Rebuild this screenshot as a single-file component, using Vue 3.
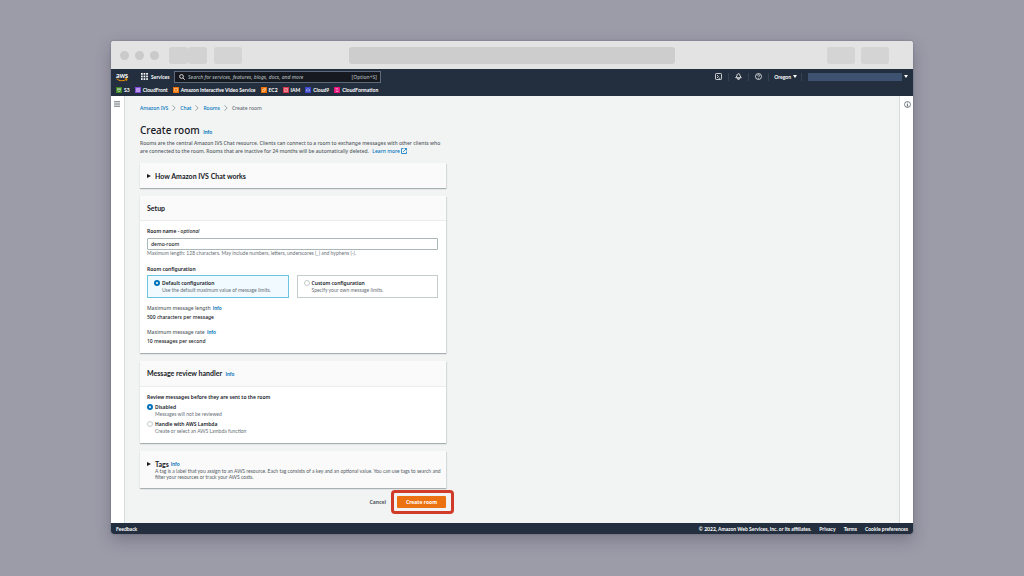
<template>
  <div class="desktop">
    <div class="window">
      <div class="chrome">
        <div class="lights"><i></i><i></i><i></i></div>
        <div class="tabs"><i></i><i></i></div>
        <div class="tab"></div>
        <div class="address"></div>
        <div class="tab tab-end"></div>
        <div class="tab"></div>
      </div>

      <header class="nav">
        <div class="nav-row">
          <a href="#" class="logo" aria-label="AWS">
            <span>aws</span>
            <svg viewBox="0 0 24 7" width="12" height="4">
              <path d="M1 1c6 5 14 5 20 1M18 1l4 0-1 4" fill="none" stroke="#f90" stroke-width="2" />
            </svg>
          </a>
          <button class="services">
            <svg viewBox="0 0 7 7" width="7" height="7" fill="#fff">
              <template v-for="y in 3" :key="y">
                <rect v-for="x in 3" :key="x" :x="(x - 1) * 2.6" :y="(y - 1) * 2.6" width="1.7" height="1.7" />
              </template>
            </svg>
            Services
          </button>
          <label class="search">
            <svg viewBox="0 0 12 12" width="6" height="6" fill="none" stroke="#fff" stroke-width="1.6">
              <circle cx="5" cy="5" r="3.8" />
              <path d="M8 8l3.5 3.5" />
            </svg>
            <input
              v-model="query"
              type="search"
              aria-label="Search"
              placeholder="Search for services, features, blogs, docs, and more"
            />
            <span>[Option+S]</span>
          </label>
          <div class="nav-tools">
            <button aria-label="CloudShell">
              <svg viewBox="0 0 14 14" width="7" height="7" fill="none" stroke="#fff" stroke-width="1.5">
                <rect x="1" y="1" width="12" height="12" rx="1.5" />
                <path d="M4 4l3 3-3 3M7.500 10.500h3" />
              </svg>
            </button>
            <button aria-label="Notifications">
              <svg viewBox="0 0 14 14" width="7" height="7" fill="none" stroke="#fff" stroke-width="1.7">
                <path d="M7 1.500c-2.500 0-3 2-3 4L1.500 9.500h11L10 5.500c0-2-.5-4-3-4zM5.500 10v2.500h3V10" />
              </svg>
            </button>
            <button aria-label="Help">
              <svg viewBox="0 0 14 14" width="7" height="7" fill="none" stroke="#fff" stroke-width="1.5">
                <circle cx="7" cy="7" r="6" />
                <path d="M4.800 5.500c0-3 4.600-2.600 4.400 0C9.100 6.700 7 6.800 7 8.400M7 9.800v1.600" />
              </svg>
            </button>
            <button class="region">Oregon <i class="caret"></i></button>
            <button class="account" aria-label="Account"><span></span><i class="caret"></i></button>
          </div>
        </div>
        <nav class="favorites">
          <a v-for="item in favorites" :key="item.name" href="#">
            <svg viewBox="0 0 12 12" width="6" height="6">
              <rect width="12" height="12" :fill="item.color" />
              <path :d="item.icon" fill="none" stroke="#fff" stroke-opacity=".85" />
            </svg>
            {{ item.name }}
          </a>
        </nav>
      </header>

      <div class="body">
        <aside class="rail">
          <button aria-label="Open navigation">
            <svg viewBox="0 0 6 6" width="6" height="6" stroke="#545b64" stroke-width=".9">
              <path d="M0 .8h6M0 3h6M0 5.200h6" />
            </svg>
          </button>
        </aside>

        <main>
          <nav class="crumbs">
            <template v-for="crumb in crumbs" :key="crumb">
              <a href="#">{{ crumb }}</a>
              <svg viewBox="0 0 4 6" width="4" height="6" fill="none" stroke="#879596" stroke-width=".8">
                <path d="M.5 .3l2.600 2.700L.5 5.700" />
              </svg>
            </template>
            <span>Create room</span>
          </nav>

          <h1>Create room <a href="#" class="info">Info</a></h1>
          <p class="intro">
            Rooms are the central Amazon IVS Chat resource. Clients can connect to a room to exchange
            messages with other clients who are connected to the room. Rooms that are inactive for 24
            months will be automatically deleted.
            <a href="#">
              Learn more
              <svg viewBox="0 0 12 12" width="6" height="6" fill="none" stroke="#0073bb" stroke-width="1.6">
                <path d="M5 1H1v10h10V7M7 1h4v4M11 1L4.500 7.500" />
              </svg>
            </a>
          </p>

          <section class="panel how">
            <h2><button class="expander"><i class="arrow"></i>How Amazon IVS Chat works</button></h2>
          </section>

          <form @submit.prevent>
            <section class="panel">
              <div class="panel-head"><h2>Setup</h2></div>
              <div class="panel-body">
                <label class="label" for="room-name">Room name - <em>optional</em></label>
                <input id="room-name" v-model="roomName" class="text-input" type="text" />
                <p class="hint">
                  Maximum length: 128 characters. May include numbers, letters, underscores (_) and hyphens (-).
                </p>

                <div class="label config-label">Room configuration</div>
                <div class="tiles">
                  <label
                    v-for="tile in tiles"
                    :key="tile.value"
                    class="tile"
                    :class="{ selected: config === tile.value }"
                  >
                    <input v-model="config" type="radio" name="config" :value="tile.value" />
                    <span>
                      <span class="option">{{ tile.title }}</span>
                      <span class="hint">{{ tile.text }}</span>
                    </span>
                  </label>
                </div>

                <dl>
                  <div v-for="limit in limits" :key="limit.name">
                    <dt>{{ limit.name }} <a href="#" class="info">Info</a></dt>
                    <dd>{{ limit.value }}</dd>
                  </div>
                </dl>
              </div>
            </section>

            <section class="panel">
              <div class="panel-head"><h2>Message review handler <a href="#" class="info">Info</a></h2></div>
              <div class="panel-body handlers">
                <div class="label">Review messages before they are sent to the room</div>
                <label v-for="item in handlers" :key="item.value" class="handler">
                  <input v-model="handler" type="radio" name="handler" :value="item.value" />
                  <span>
                    <span class="option">{{ item.title }}</span>
                    <span class="hint">{{ item.text }}</span>
                  </span>
                </label>
              </div>
            </section>

            <section class="panel tags">
              <h2>
                <button type="button" class="expander"><i class="arrow"></i>Tags</button>
                <a href="#" class="info">Info</a>
              </h2>
              <p class="hint">
                A tag is a label that you assign to an AWS resource. Each tag consists of a key and an
                optional value. You can use tags to search and filter your resources or track your AWS costs.
              </p>
            </section>

            <div class="actions">
              <button type="button" class="cancel">Cancel</button>
              <button type="submit" class="create">Create room</button>
            </div>
          </form>
        </main>

        <aside class="rail rail-end">
          <button aria-label="Open help panel">
            <svg viewBox="0 0 14 14" width="7" height="7" fill="none" stroke="#545b64" stroke-width="1.5">
              <circle cx="7" cy="7" r="6" />
              <path d="M7 3v1.600M5.500 6.300H7v4M5.200 10.300h3.600" />
            </svg>
          </button>
        </aside>
      </div>

      <footer>
        <a href="#" class="feedback">Feedback</a>
        <span>© 2022, Amazon Web Services, Inc. or its affiliates.</span>
        <a href="#">Privacy</a>
        <a href="#">Terms</a>
        <a href="#">Cookie preferences</a>
      </footer>
    </div>
  </div>
</template>

<script setup>
import { ref } from "vue";

const query = ref("");
const roomName = ref("demo-room");
const config = ref("default");
const handler = ref("disabled");

const crumbs = ["Amazon IVS", "Chat", "Rooms"];

const favorites = [
  { name: "S3", color: "#3f8624", icon: "M3 3h6l-1 6H4zM3 5h6" },
  { name: "CloudFront", color: "#8348dc", icon: "M3 3h6v6H3zM3 6h6M6 3v6" },
  { name: "Amazon Interactive Video Service", color: "#ed7100", icon: "M3 3h6v5H3zM5 10h2" },
  { name: "EC2", color: "#ed7100", icon: "M3 5h4v4H3zM5 3h4v4" },
  { name: "IAM", color: "#dd344c", icon: "M3 3h6v6H3zM6 4v4" },
  { name: "Cloud9", color: "#3b48cc", icon: "M3 8h6V5L6 3 3 5z" },
  { name: "CloudFormation", color: "#e7157b", icon: "M3 3h5M3 6h6M4 9h5" },
];

const tiles = [
  {
    value: "default",
    title: "Default configuration",
    text: "Use the default maximum value of message limits.",
  },
  { value: "custom", title: "Custom configuration", text: "Specify your own message limits." },
];

const limits = [
  { name: "Maximum message length", value: "500 characters per message" },
  { name: "Maximum message rate", value: "10 messages per second" },
];

const handlers = [
  { value: "disabled", title: "Disabled", text: "Messages will not be reviewed" },
  {
    value: "lambda",
    title: "Handle with AWS Lambda",
    text: "Create or select an AWS Lambda function",
  },
];
</script>

<style>
body {
  margin: 0;
}
</style>

<style scoped>
* {
  box-sizing: border-box;
}

.desktop {
  --narrow: Lato, "Noto Sans", sans-serif;
  min-height: 100vh;
  padding: 41px 111px 42px;
  display: flex;
  background: #9c9ba8;
  font-family: "Noto Sans", "Open Sans", sans-serif;
  font-size: 5px;
  font-weight: 500;
  line-height: 8px;
  color: #16191f;
}

.window {
  flex: 1;
  min-width: 0;
  display: flex;
  flex-direction: column;
  border-radius: 3px;
  overflow: hidden;
  background: #f2f3f3;
  box-shadow: 0 6px 16px rgba(50, 48, 65, 0.3), 0 0 2px rgba(50, 48, 65, 0.4);
}

h1,
h2,
p,
dl,
dd {
  margin: 0;
}

button {
  padding: 0;
  border: 0;
  background: none;
  font: inherit;
  color: inherit;
  cursor: pointer;
}

a {
  color: #0073bb;
  text-decoration: none;
}

svg {
  flex: none;
}

.chrome {
  height: 28px;
  padding: 0 24px 0 9px;
  display: flex;
  align-items: center;
  background: #e3e3e3;
}

.lights {
  display: flex;
  gap: 6px;
}

.lights i {
  width: 9px;
  height: 9px;
  border-radius: 50%;
  background: #cacaca;
}

.tabs {
  display: flex;
  margin: 0 7px 0 10px;
}

.tabs i {
  width: 19px;
  height: 17px;
  border-radius: 3px;
  background: #d2d2d2;
}

.tab {
  width: 28px;
  height: 17px;
  border-radius: 3px;
  background: #d4d4d4;
}

.address {
  width: 326px;
  height: 17px;
  margin-left: 107px;
  border-radius: 3px;
  background: #cdcdcd;
}

.tab-end {
  margin: 0 6px 0 auto;
}

.nav {
  height: 27px;
  background: #232f3e;
  color: #fff;
  font-family: var(--narrow);
  font-weight: 700;
}

.nav-row {
  height: 15px;
  padding: 0 5px;
  display: flex;
  align-items: center;
}

.logo {
  width: 20px;
  display: flex;
  flex-direction: column;
  color: #fff;
  font-size: 7px;
  line-height: 6px;
}

.services {
  margin-left: 5px;
  width: 28px;
  display: flex;
  align-items: center;
  gap: 3px;
}

.search {
  width: 207px;
  height: 12px;
  margin-left: 5px;
  padding: 0 3px 0 4px;
  display: flex;
  align-items: center;
  gap: 3px;
  border: 1px solid #5f6b7a;
  background: #16191f;
  color: #aab7b8;
  font-family: "Noto Sans", sans-serif;
  font-weight: 500;
}

.search input {
  flex: 1;
  min-width: 0;
  padding: 0;
  border: 0;
  outline: 0;
  background: none;
  font: inherit;
  color: inherit;
}

.search input::placeholder {
  color: #aab7b8;
  font-style: italic;
}

.nav-tools {
  margin-left: auto;
  display: flex;
  align-items: center;
}

.nav-tools button {
  height: 8px;
  padding: 0 6px;
  display: flex;
  align-items: center;
  border-right: 1px solid #354150;
}

.nav-tools .region {
  gap: 2px;
  padding: 0 4px 0 5px;
}

.nav-tools .account {
  gap: 2px;
  padding: 0 0 0 6px;
  border: 0;
}

.account span {
  width: 94px;
  height: 8px;
  background: #3d5270;
}

.caret {
  border: 2px solid transparent;
  border-top: 3px solid #fff;
  border-bottom: 0;
}

.favorites {
  height: 12px;
  padding: 0 5px;
  display: flex;
  align-items: center;
  gap: 5px;
}

.favorites a {
  display: flex;
  align-items: center;
  gap: 2px;
  color: #fff;
}

.body {
  flex: 1;
  display: flex;
}

.rail {
  width: 14px;
  padding: 5px 3px 0;
  display: flex;
  align-items: flex-start;
  border-right: 1px solid #d5dbdb;
  background: #fff;
}

.rail-end {
  padding-left: 4px;
  border-right: 0;
  border-left: 1px solid #d5dbdb;
}

.rail button {
  height: 7px;
  display: flex;
}

main {
  flex: 1;
  padding: 8px 15px 12px;
}

main > * {
  max-width: 306px;
}

.crumbs {
  display: flex;
  align-items: center;
  gap: 4px;
  color: #687078;
}

h1 {
  margin-top: 11px;
  font-size: 10px;
  line-height: 14px;
  font-weight: 500;
}

.info {
  margin-left: 1px;
  font-family: var(--narrow);
  font-size: 5px;
  font-weight: 700;
}

.intro {
  color: #545b64;
}

.intro a {
  margin-left: 2px;
  display: inline-flex;
  align-items: center;
  gap: 1px;
  vertical-align: top;
}

h2 {
  font-family: var(--narrow);
  font-size: 7px;
  line-height: 8px;
  font-weight: 700;
}

h2 .info {
  margin-left: 2px;
}

.panel {
  margin-bottom: 8px;
  background: #fff;
  box-shadow: 0 1px 1px rgba(0, 28, 36, 0.25), 1px 1px 1px rgba(0, 28, 36, 0.08);
}

.how {
  margin-top: 8px;
  padding: 8px 7px;
  background: #fafafa;
}

.expander {
  display: inline-flex;
  align-items: center;
  gap: 4px;
}

.arrow {
  border: 2px solid transparent;
  border-left: 4px solid #16191f;
  border-right: 0;
}

.panel-head {
  padding: 8px 8px 8px 7px;
  border-bottom: 1px solid #eaeded;
  background: #fafafa;
}

.panel-body {
  padding: 6px 8px 7px 7px;
}

.label,
.option {
  display: block;
  font-weight: 600;
}

.label em {
  font-weight: 500;
}

.text-input {
  width: 100%;
  height: 12px;
  margin-top: 3px;
  padding: 0 3px;
  display: block;
  border: 1px solid #aab7b8;
  border-radius: 1px;
  font: inherit;
  color: #16191f;
}

.hint {
  display: block;
  font-family: var(--narrow);
  font-weight: 400;
  line-height: 7px;
  color: #687078;
}

.config-label {
  margin-top: 8px;
}

.tiles {
  margin-top: 2px;
  display: flex;
  gap: 8px;
}

.tile {
  flex: 1;
  height: 23px;
  padding: 3px 6px;
  display: flex;
  gap: 2px;
  border: 1px solid #c5cccc;
}

.tile.selected {
  border-color: #6cc5e0;
  background: #f1faff;
}

input[type="radio"] {
  appearance: none;
  flex: none;
  width: 6px;
  height: 6px;
  margin: 1px 0 0;
  border: 1px solid #c5cccc;
  border-radius: 50%;
  background: #fff;
}

input[type="radio"]:checked {
  border: 2px solid #0073bb;
}

dl {
  margin-top: 6px;
  display: flex;
  flex-direction: column;
  gap: 6px;
}

dt {
  line-height: 9px;
  color: #545b64;
}

dd {
  line-height: 9px;
}

.handlers {
  padding: 6px 8px 8px 7px;
}

.handler {
  margin-top: 2px;
  display: flex;
  gap: 2px;
}

.tags {
  padding: 8px 0 8px 7px;
  background: #fafafa;
}

.tags .hint {
  padding-left: 8px;
  line-height: 6px;
  color: #545b64;
}

.actions {
  display: flex;
  justify-content: flex-end;
  align-items: center;
  gap: 11px;
  font-weight: 700;
}

.cancel {
  color: #545b64;
}

.create {
  position: relative;
  width: 49px;
  height: 12px;
  border-radius: 1px;
  background: #ec7211;
  color: #fff;
}

.create::after {
  content: "";
  position: absolute;
  inset: -6px -8px -6px -6px;
  border: 3px solid #d13b2a;
  border-radius: 4px;
}

footer {
  height: 11px;
  padding: 0 5px;
  display: flex;
  align-items: center;
  gap: 8px;
  background: #232f3e;
  color: #fff;
  font-family: var(--narrow);
  font-weight: 700;
}

footer a {
  color: #fff;
}

.feedback {
  margin-right: auto;
}
</style>
